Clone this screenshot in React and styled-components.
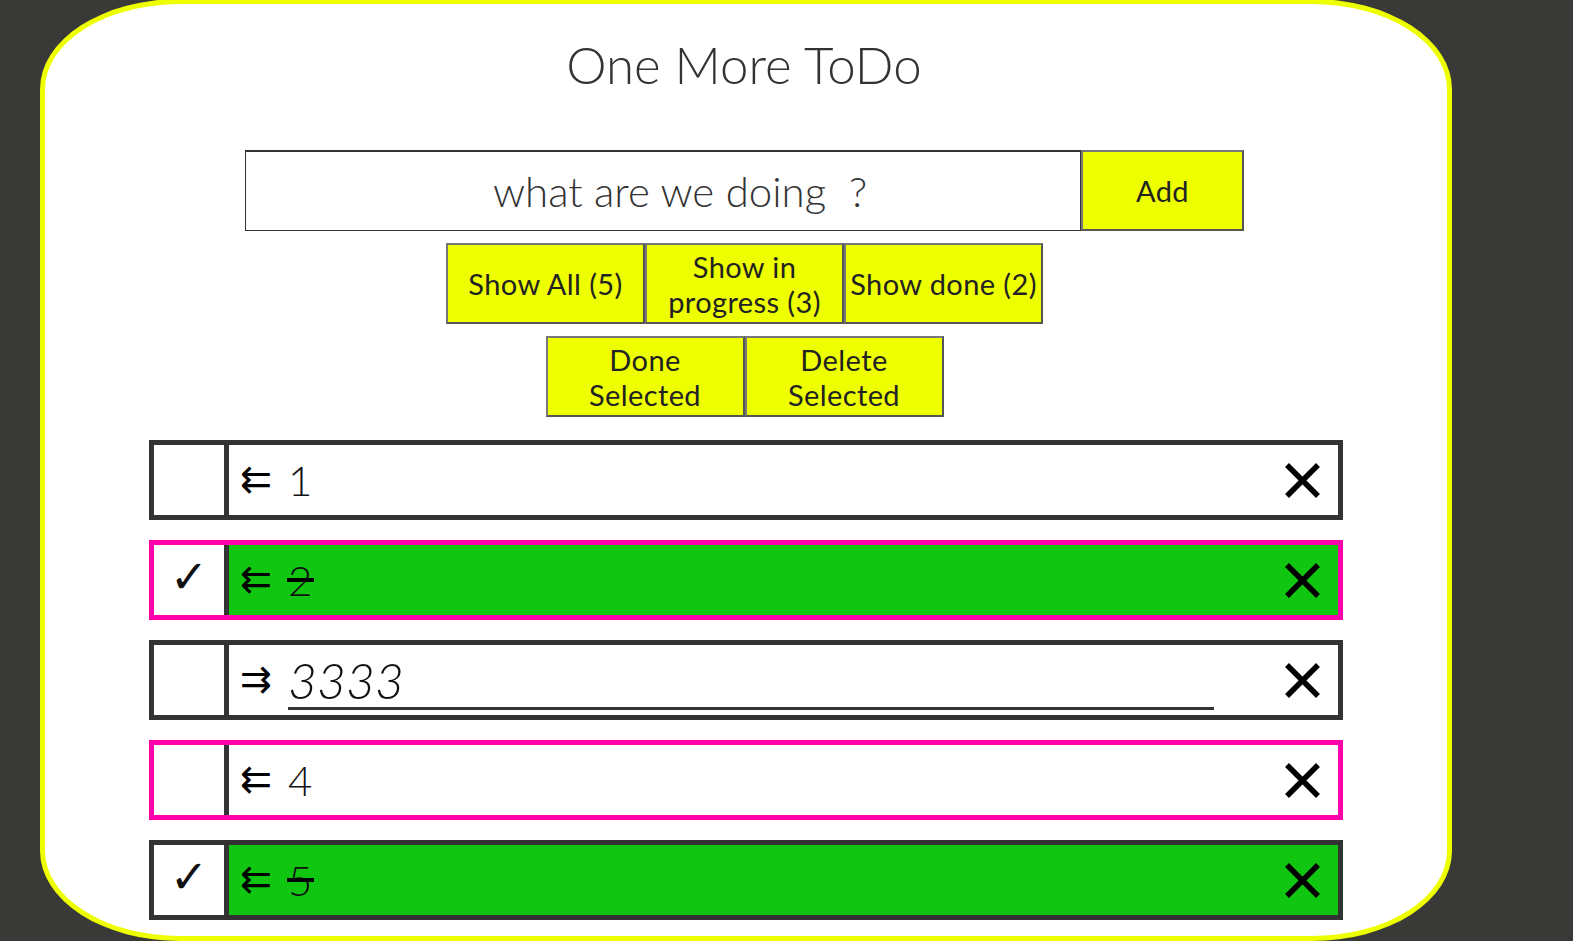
import React, { useState } from "react";
import styled, { createGlobalStyle } from "styled-components";

const Global = createGlobalStyle`
  body {
    margin: 0;
    background: #393937;
    font-family: Lato, "Open Sans", sans-serif;
    overflow: hidden;
  }
`;

const Card = styled.main`
  box-sizing: border-box;
  width: 1412px;
  height: 942px;
  margin: -1px 0 0 40px;
  border: 5px solid #eeff00;
  border-radius: 140px / 90px;
  background: #fff;
  display: flex;
  flex-direction: column;
  align-items: center;
  overflow: hidden;
`;

const Title = styled.h1`
  margin: 30px 0 0 -4px;
  font-size: 51px;
  font-weight: 300;
  line-height: 1.2;
  color: #333;
`;

const Form = styled.div`
  display: flex;
  margin: 55px 0 0 -3px;
`;

const TaskInput = styled.input`
  box-sizing: border-box;
  width: 836px;
  height: 81px;
  padding: 0 0 0 34px;
  border: 1px solid #333;
  border-top-width: 2px;
  font-family: Lato, sans-serif;
  font-weight: 300;
  font-size: 42px;
  text-align: center;
  color: #333;
  outline: none;
  &::placeholder {
    color: #333;
  }
`;

const YellowButton = styled.button`
  box-sizing: border-box;
  width: ${p => p.$w || 199}px;
  height: 81px;
  padding: 0 2px;
  background: #eeff00;
  border: 2px solid #555;
  border-top-color: #777;
  border-left-color: #777;
  font-family: Lato, sans-serif;
  font-weight: 400;
  font-size: ${p => p.$size || 29}px;
  letter-spacing: 0.4px;
  line-height: 35px;
  color: #222;
  cursor: pointer;
`;

const ButtonRow = styled.div`
  display: flex;
  margin: 12px 0 0 -3px;
`;

const List = styled.ul`
  list-style: none;
  margin: 23px 0 0;
  padding: 0;
  width: 1194px;
  display: flex;
  flex-direction: column;
  gap: 20px;
`;

const Row = styled.li`
  box-sizing: border-box;
  height: 80px;
  border: 5px solid ${p => (p.$selected ? "#ff00aa" : "#333")};
  display: grid;
  grid-template-columns: 70px 1fr;
`;

const Check = styled.div`
  background: #fff;
  display: flex;
  align-items: center;
  justify-content: center;
  font-family: "DejaVu Sans", sans-serif;
  font-size: 46px;
  color: #111;
  padding-bottom: 6px;
`;

const Body = styled.div`
  border-left: 5px solid #333;
  background: ${p => (p.$done ? "#11c611" : "#fff")};
  display: flex;
  align-items: center;
  padding: 0 17px 0 11px;
`;

const Arrow = styled.span`
  font-family: "DejaVu Sans", sans-serif;
  font-size: 38px;
  color: #000;
  width: 48px;
  line-height: 1;
  margin-top: -2px;
`;

const Text = styled.span`
  position: relative;
  font-family: Lato, sans-serif;
  font-weight: 300;
  font-size: 42px;
  color: #111;
  &::after {
    content: "";
    display: ${p => (p.$done ? "block" : "none")};
    position: absolute;
    left: -1px;
    right: -2px;
    top: 46%;
    height: 4px;
    background: #000;
  }
`;

const EditInput = styled.input`
  box-sizing: border-box;
  width: 926px;
  height: 58px;
  align-self: flex-end;
  margin-bottom: 5px;
  padding: 0;
  border: none;
  border-bottom: 3px solid #333;
  background: transparent;
  font-family: Lato, sans-serif;
  font-weight: 300;
  font-style: italic;
  font-size: 50px;
  color: #111;
  outline: none;
`;

const Remove = styled.button`
  margin-left: auto;
  padding: 0;
  border: none;
  background: none;
  display: flex;
  cursor: pointer;
`;

const Cross = () => (
  <svg width="37" height="37" viewBox="0 0 37 37">
    <path d="M3 3 L34 34 M34 3 L3 34" stroke="#000" strokeWidth="5.5" />
  </svg>
);

const todos = [
  { id: 1, text: "1", done: false, selected: false },
  { id: 2, text: "2", done: true, selected: true },
  { id: 3, text: "3333", done: false, selected: false, editing: true },
  { id: 4, text: "4", done: false, selected: true },
  { id: 5, text: "5", done: true, selected: false },
];

export default function App() {
  const [items] = useState(todos);
  const doneCount = items.filter(t => t.done).length;

  return (
    <>
      <Global />
      <Card>
        <Title>One More ToDo</Title>
        <Form>
          <TaskInput placeholder="what are we doing  ?" />
          <YellowButton $w={163}>Add</YellowButton>
        </Form>
        <ButtonRow>
          <YellowButton>Show All ({items.length})</YellowButton>
          <YellowButton>Show in progress ({items.length - doneCount})</YellowButton>
          <YellowButton>Show done ({doneCount})</YellowButton>
        </ButtonRow>
        <ButtonRow>
          <YellowButton>Done<br />Selected</YellowButton>
          <YellowButton>Delete<br />Selected</YellowButton>
        </ButtonRow>
        <List>
          {items.map(t => (
            <Row key={t.id} $selected={t.selected}>
              <Check>{t.done ? "✓" : ""}</Check>
              <Body $done={t.done}>
                <Arrow>{t.editing ? "⇉" : "⇇"}</Arrow>
                {t.editing ? (
                  <EditInput defaultValue={t.text} />
                ) : (
                  <Text $done={t.done}>{t.text}</Text>
                )}
                <Remove>
                  <Cross />
                </Remove>
              </Body>
            </Row>
          ))}
        </List>
      </Card>
    </>
  );
}
